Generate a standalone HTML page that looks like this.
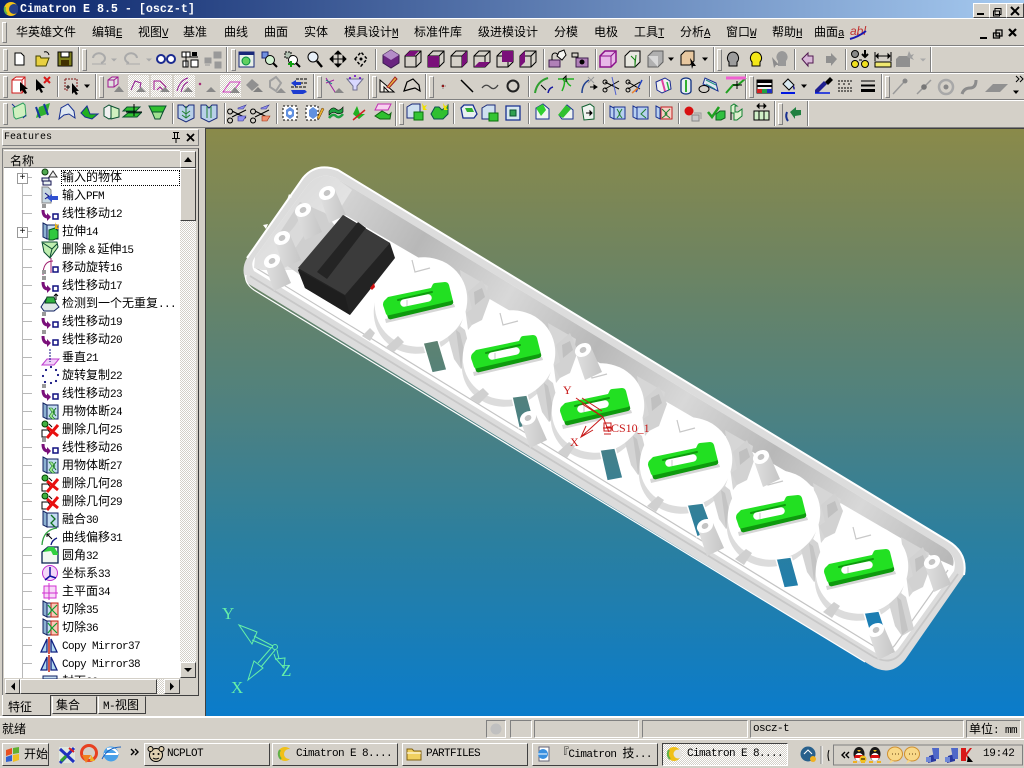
<!DOCTYPE html>
<html><head><meta charset="utf-8"><title>Cimatron E 8.5</title>
<style>
html,body{margin:0;padding:0;background:#d4d0c8;width:1024px;height:768px;overflow:hidden}
body{position:relative;font:12px/14px "WenQuanYi Zen Hei","Noto Sans CJK SC",sans-serif;color:#000}
div,span.a,svg.a{position:absolute}
i{font:normal 11px "Liberation Mono",monospace;letter-spacing:-.6px}
.m{position:absolute;top:25px;white-space:nowrap}
.m u{font:11px "Liberation Mono",monospace;letter-spacing:-.6px;text-decoration:underline}
.row{left:0;width:1024px;border-top:1px solid #fff;border-bottom:1px solid #808080;box-sizing:border-box}
.e{width:1px;background:#808080;box-shadow:1px 0 #fff}
.gr{width:3px;background:#d4d0c8;border:1px solid;border-color:#fff #808080 #808080 #fff;box-sizing:content-box}
.wb{width:16px;height:13px;top:3px;background:#d4d0c8;border:1px solid;border-color:#fff #404040 #404040 #fff}
.t{left:62px;white-space:nowrap;height:18px;line-height:18px}
.d{left:22px;width:10px;height:1px;background:#b8b8b8}
.pl{left:17px;width:9px;height:9px;background:#fff;border:1px solid #999;font:10px/9px "Liberation Mono",monospace;text-align:center}
.btn{background:#d4d0c8;border:1px solid;border-color:#fff #404040 #404040 #fff;box-sizing:border-box}
.sun{top:720px;height:18px;border:1px solid;border-color:#808080 #fff #fff #808080;box-sizing:border-box}
.tk{top:743px;height:23px;width:126px;background:#d4d0c8;border:1px solid;border-color:#fff #404040 #404040 #fff;box-sizing:border-box;font:11px/21px "Liberation Mono",monospace;letter-spacing:-.6px;white-space:nowrap}
.hatch{background:repeating-conic-gradient(#fff 0 25%,#d4d0c8 0 50%) 0 0/2px 2px}
</style></head><body>

<!-- title -->
<div style="left:0;top:0;width:1024px;height:18px;background:linear-gradient(90deg,#0a246a,#a6caf0)"></div>
<svg class="a" style="left:2px;top:1px" width="16" height="16" viewBox="0 0 16 16"><circle cx="9" cy="8" r="7" fill="#f2c218"/><circle cx="12" cy="8" r="5" fill="#26408a"/><path d="M3 6a7 7 0 0 0 2 7" stroke="#5fb548" stroke-width="2" fill="none"/></svg>
<div style="left:20px;top:2px;color:#fff;font:bold 11.67px/14px 'Liberation Mono',monospace;white-space:pre">Cimatron E 8.5 - [oscz-t]</div>
<div class="wb" style="left:973px"></div><div class="wb" style="left:989px"></div><div class="wb" style="left:1006px"></div>
<svg class="a" style="left:973px;top:3px" width="51" height="15"><path d="M4 11h7" stroke="#000" stroke-width="2"/><path d="M22 5.500h6v6h-6zM20.500 8h6v5h-6z" fill="#d4d0c8" stroke="#000"/><path d="M38 4l8 8M46 4l-8 8" stroke="#000" stroke-width="2"/></svg>

<!-- menu -->
<div style="left:0;top:18px;width:1024px;height:28px;border-top:1px solid #fff;border-bottom:1px solid #808080;box-sizing:border-box"></div>
<div class="gr" style="left:2px;top:22px;height:19px"></div>
<span class="m" style="left:16px">华英雄文件</span><span class="m" style="left:92px">编辑<u>E</u></span><span class="m" style="left:138px">视图<u>V</u></span><span class="m" style="left:183px">基准</span><span class="m" style="left:224px">曲线</span><span class="m" style="left:264px">曲面</span><span class="m" style="left:304px">实体</span><span class="m" style="left:344px">模具设计<u>M</u></span><span class="m" style="left:414px">标准件库</span><span class="m" style="left:478px">级进模设计</span><span class="m" style="left:554px">分模</span><span class="m" style="left:594px">电极</span><span class="m" style="left:634px">工具<u>T</u></span><span class="m" style="left:680px">分析<u>A</u></span><span class="m" style="left:726px">窗口<u>W</u></span><span class="m" style="left:772px">帮助<u>H</u></span><span class="m" style="left:814px">曲面<u>a</u></span>
<div style="left:850px;top:24px;font:italic 12px 'Liberation Sans',sans-serif;color:#c03030">abl</div>
<svg class="a" style="left:848px;top:24px" width="176" height="18"><path d="M2 15q8-2 16-8" stroke="#1818b0" stroke-width="2" fill="none"/><path d="M132 14h7" stroke="#000" stroke-width="2"/><path d="M148 6h6v6h-6zM145.500 9h6v5h-6z" fill="#d4d0c8" stroke="#000" stroke-width="1.300"/><path d="M161 5l7 7M168 5l-7 7" stroke="#000" stroke-width="2.200"/></svg>

<!-- toolbars frames -->
<div class="row" style="top:46px;height:27px"></div>
<div class="row" style="top:73px;height:27px"></div>
<div class="row" style="top:100px;height:28px"></div>
<!-- grips row1 -->
<div class="gr" style="left:3px;top:49px;height:20px"></div><div class="e" style="left:78px;top:47px;height:25px"></div>
<div class="gr" style="left:82px;top:49px;height:20px"></div><div class="e" style="left:226px;top:47px;height:25px"></div>
<div class="gr" style="left:231px;top:49px;height:20px"></div><div class="e" style="left:375px;top:49px;height:21px"></div><div class="e" style="left:543px;top:49px;height:21px"></div><div class="e" style="left:595px;top:49px;height:21px"></div><div class="e" style="left:713px;top:47px;height:25px"></div>
<div class="gr" style="left:717px;top:49px;height:20px"></div><div class="e" style="left:794px;top:49px;height:21px"></div><div class="e" style="left:845px;top:49px;height:21px"></div><div class="e" style="left:930px;top:47px;height:25px"></div>
<!-- grips row2 -->
<div class="gr" style="left:3px;top:76px;height:20px"></div><div class="e" style="left:57px;top:76px;height:21px"></div><div class="e" style="left:95px;top:74px;height:25px"></div>
<div class="gr" style="left:99px;top:76px;height:20px"></div><div class="e" style="left:313px;top:74px;height:25px"></div>
<div class="gr" style="left:317px;top:76px;height:20px"></div><div class="e" style="left:368px;top:74px;height:25px"></div>
<div class="gr" style="left:372px;top:76px;height:20px"></div><div class="e" style="left:425px;top:74px;height:25px"></div>
<div class="gr" style="left:429px;top:76px;height:20px"></div><div class="e" style="left:528px;top:76px;height:21px"></div><div class="e" style="left:649px;top:76px;height:21px"></div><div class="e" style="left:745px;top:74px;height:25px"></div>
<div class="gr" style="left:749px;top:76px;height:20px"></div><div class="e" style="left:881px;top:74px;height:25px"></div>
<div class="gr" style="left:885px;top:76px;height:20px"></div>
<!-- grips row3 -->
<div class="gr" style="left:3px;top:103px;height:20px"></div><div class="e" style="left:172px;top:103px;height:21px"></div><div class="e" style="left:224px;top:103px;height:21px"></div><div class="e" style="left:276px;top:103px;height:21px"></div><div class="e" style="left:395px;top:101px;height:25px"></div>
<div class="gr" style="left:399px;top:103px;height:20px"></div><div class="e" style="left:453px;top:103px;height:21px"></div><div class="e" style="left:528px;top:103px;height:21px"></div><div class="e" style="left:603px;top:103px;height:21px"></div><div class="e" style="left:678px;top:103px;height:21px"></div><div class="e" style="left:774px;top:101px;height:25px"></div>
<div class="gr" style="left:778px;top:103px;height:20px"></div><div class="e" style="left:807px;top:101px;height:25px"></div>
<div class="hatch" style="left:128px;top:75px;width:21px;height:22px"></div><div class="hatch" style="left:151px;top:75px;width:21px;height:22px"></div><div class="hatch" style="left:174px;top:75px;width:21px;height:22px"></div><div class="hatch" style="left:220px;top:75px;width:21px;height:22px"></div>

<!-- toolbar icons -->
<svg class="a" style="left:0;top:0" width="1024" height="128" viewBox="0 0 1024 128">
<defs>
<path id="wc" d="M-8-3L-3-8H8V3L3 8H-8ZM-8-3H3V8M3-3L8-8" fill="none" stroke="#000"/>
<path id="dn" d="M-3-1.500h6L0 2Z" fill="#000"/>
<path id="sz" d="M-8-4a2.500 2.500 0 1 0 .1 0M-8 5a2.500 2.500 0 1 0 .1 0M-6-2L8 5M-6 4L8-3" fill="none" stroke="#000"/>
<path id="vb" d="M-8-8h5l3 3 3-3h5V5L0 9l-8-4Z" fill="#b8d0e8" stroke="#182878"/>
<g id="ex"><path d="M-8-5l5-3h8v11l-5 3h-8z" fill="#cfe0f0" stroke="#182878"/><path d="M-1 0h9v8h-9z" fill="#35c535" stroke="#0a700a"/></g>
</defs>
<!-- row 1 -->
<path d="M15 53h6l3 3v9h-9z" fill="#fff" stroke="#000"/>
<path d="M36 56h4l1 2h8l-3 8H36z" fill="#e8d040" stroke="#404000"/><path d="M44 52q4-1 5 3" stroke="#000" fill="none"/>
<path d="M58 52h14v14H58z" fill="#808020" stroke="#000"/><path d="M61 52h8v5h-8z" fill="#fff" stroke="#000"/><path d="M61 60h8v6h-8z" fill="#403000"/>
<path d="M93 58a6 5 0 1 1 8 5" fill="none" stroke="#aaa" stroke-width="2"/><path d="M92 64h14" stroke="#aaa"/><path d="M111 58.500h6l-3 3z" fill="#aaa"/>
<path d="M137 58a6 5 0 1 0-8 5" fill="none" stroke="#aaa" stroke-width="2"/><path d="M126 64h14" stroke="#aaa"/>
<path d="M146 58.500h6l-3 3z" fill="#aaa"/>
<circle cx="161" cy="59" r="4" fill="#fff" stroke="#1a2a90" stroke-width="2"/><circle cx="171" cy="59" r="4" fill="#fff" stroke="#1a2a90" stroke-width="2"/>
<path d="M182 52h8v5h-8zM191 60h7v7h-7zM183 61h5v6h-5zM186 52v15M186 57h12" fill="#fff" stroke="#000"/><path d="M192 52h5v4h-5z" fill="#000"/>
<path d="M205 58h6v5h-6zM205 65h5M214 52h7v6h-7zM215 62h6v6h-6z" fill="#999" stroke="#999"/>
<path d="M239 52h15v15h-15z" fill="#e8f0e8" stroke="#182878"/><path d="M239 52h15v3h-15z" fill="#182878"/><circle cx="246" cy="61" r="4" fill="#60d060" stroke="#084"/>
<path d="M262 52h6v6h-6z" fill="#7090e0" stroke="#182878"/><circle cx="270" cy="60" r="4.500" fill="#d0f0d0" stroke="#000"/><path d="M273 63l4 4" stroke="#000" stroke-width="2"/>
<path d="M285 52h6v6h-6z" fill="#b0c0b0" stroke="#000" stroke-dasharray="2 1"/><circle cx="293" cy="60" r="4.500" fill="#fff" stroke="#000"/><path d="M296 63l4 4" stroke="#000" stroke-width="2"/><path d="M288 64h6M291 61v6" stroke="#10a010" stroke-width="2"/>
<circle cx="313" cy="57" r="5" fill="#e8f0f8" stroke="#000"/><path d="M317 61l5 6" stroke="#000" stroke-width="2.400"/>
<path d="M338 51v16M330 59h16M338 51l-3 3h6zM338 67l-3-3h6zM330 59l3-3v6zM346 59l-3-3v6z" fill="#000" stroke="#000" stroke-width="1"/>
<path d="M355 59l6-7 6 7-6 7z" fill="none" stroke="#000" stroke-dasharray="3 2" stroke-width="1.500"/><circle cx="361" cy="59" r="1.500"/>
<path d="M383 55l8-5 8 5v8l-8 5-8-5z" fill="#6a2580" stroke="#3a1a50"/><path d="M383 55l8 5 8-5-8-5z" fill="#b48cc8"/>
<use href="#wc" x="413" y="59"/><path d="M410 51h9l-5 5h-9z" fill="#7a107a"/>
<use href="#wc" x="436" y="59"/><path d="M428 56h11v11h-11z" fill="#7a107a"/>
<use href="#wc" x="459" y="59"/><path d="M462 56l5-5v11l-5 5z" fill="#7a107a"/>
<use href="#wc" x="482" y="59"/><path d="M474 67l5-5h11l-5 5z" fill="#7a107a"/>
<use href="#wc" x="505" y="59"/><path d="M502 51h11v11h-11z" fill="#7a107a"/>
<use href="#wc" x="528" y="59"/><path d="M520 56l5-5v11l-5 5z" fill="#7a107a"/>
<path d="M549 60h11v7h-11z" fill="#b080b8" stroke="#402050"/><path d="M552 60v-4a3 3 0 0 1 6 0" fill="none" stroke="#000"/><path d="M559 52l5-2 2 5-4 5-5-4z" fill="#f4f4f0" stroke="#000"/>
<path d="M572 53h6v4h-6z" fill="none" stroke="#000"/><path d="M576 58h12v9h-12z" fill="#b080b8" stroke="#402050"/><circle cx="582" cy="62" r="2.500" fill="#000"/>
<path d="M600 56l5-5h11v11l-5 5h-11z" fill="#e8b8e8" stroke="#8a108a" stroke-width="1.500"/><path d="M600 56h11v11M611 56l5-5" fill="none" stroke="#8a108a"/>
<path d="M625 56l5-5h10v11l-5 5h-10z" fill="#e8e8e0" stroke="#000"/><path d="M631 56l4 4v7M636 55l-1 10" stroke="#108010" fill="none"/>
<path d="M648 56l5-5h10v11l-5 5h-10z" fill="#b0b0b0" stroke="#606060"/><path d="M648 56h10v11z" fill="#d8d8d8"/>
<use href="#dn" x="671" y="59"/>
<path d="M681 55l4-4h9v10l-4 4h-9z" fill="#e8c8a0" stroke="#000"/><path d="M690 58l6 8-3 0-1 3z" fill="#000"/>
<use href="#dn" x="705" y="59"/>
<path d="M733 52a6 6 0 0 1 4 10v4h-8v-4a6 6 0 0 1 4-10z" fill="#9c9c9c" stroke="#000"/>
<path d="M756 52a6 6 0 0 1 4 10v4h-8v-4a6 6 0 0 1 4-10z" fill="#f4e818" stroke="#000"/>
<path d="M782 51a6 6 0 0 1 4 10v5h-8v-5a6 6 0 0 1 4-10z" fill="#999"/><path d="M772 57l7 8-3 0-2 3z" fill="#8c8c8c"/>
<path d="M802 59l6-6v3h5v7h-5v3z" fill="#d8b8d8" stroke="#501850"/>
<path d="M837 59l-6-6v3h-5v7h5v3z" fill="#909090"/>
<circle cx="855" cy="54" r="3.500" fill="#888" stroke="#000"/><circle cx="855" cy="64" r="3.500" fill="#f0e020" stroke="#000"/><circle cx="865" cy="64" r="3.500" fill="#f0e020" stroke="#000"/><path d="M865 50v7M862 54l3 3 3-3" stroke="#000" stroke-width="2" fill="none"/><path d="M859 60h3" stroke="#000"/>
<path d="M875 52v9M891 52v9M876 56h14M876 56l2-2v4zM890 56l-2-2v4z" stroke="#000" fill="#000"/><path d="M875 62h16v5h-16z" fill="#f0e870" stroke="#000"/>
<path d="M899 56h11v11h-14v-8z" fill="#909090"/><path d="M909 51l2 4 3-1-2 3 2 3-7-3z" fill="#a0a0a0"/><path d="M920 58.500h6l-3 3z" fill="#aaa"/>
<!-- row 2 -->
<path d="M12 80l4-3h9v12l-3 4h-10z" fill="#fff" stroke="#d01818"/><path d="M12 80h10v13M22 80l3-3" fill="none" stroke="#d01818"/><path d="M20 82v10l2-2 3 4 2-1-2-4h3z" fill="#000"/>
<path d="M36 79v12l3-2 2 4 2-1-2-4h4z" fill="#000"/><path d="M44 77l6 6M50 77l-6 6" stroke="#d81818" stroke-width="2"/>
<path d="M65 79h12v8M65 79v11h4" stroke="#801818" stroke-dasharray="2 1" fill="none"/><path d="M72 83v11l2-2 2 3 2-1-2-3h3z" fill="#000"/><path d="M66 87h4M68 85v4" stroke="#000"/>
<use href="#dn" x="87" y="86"/>
<g fill="none">
<path d="M108 80l4-3h6v7l-4 3h-6zM108 80h6v7M114 80l4-3" stroke="#a01890" fill="#e0e0e0"/><path d="M114 92l5-6 5 6z" fill="#888"/>
<path d="M131 90l4-9 6 2-1 4 3 3" stroke="#901890"/><path d="M136 92l5-5 5 5z" fill="#888"/>
<path d="M154 90v-9h6l6 6-3 3-3-3-3 3" stroke="#a01890"/><path d="M160 92l5-5 5 5z" fill="#888"/>
<path d="M177 91q3-11 11-13M181 92q2-8 7-10" stroke="#901890"/><path d="M183 92l5-5 5 5z" fill="#888"/>
<path d="M199 83l2 2M201 83l-2 2" stroke="#a02070"/><path d="M206 92l5-5 5 5z" fill="#888"/>
<path d="M223 92l7-10h10l-7 10z" stroke="#d040c0"/><path d="M230 93l5-6 5 6z" fill="#888"/>
</g>
<path d="M246 85l6-6 7 6-7 6z" fill="#909090"/><path d="M253 92l5-5 5 5z" fill="#808080"/>
<path d="M270 81l6-4 5 6-5 8-6-4z" fill="none" stroke="#a0a0a0" stroke-width="2"/><path d="M276 93l5-5 5 5z" fill="#909090"/>
<path d="M296 79h12M296 83h12M291 87h16" stroke="#000" stroke-dasharray="3 1"/><path d="M291 83l5-3v2h5v3h-5v2z" fill="#1c3cd0"/><path d="M291 90h14l2 2-4 2h-10z" fill="#1c3cd0"/>
<path d="M326 78l9 14M326 83l8-3" stroke="#a020a0" fill="none"/><path d="M334 93l5-5 5 5z" fill="#888"/><path d="M326 80l6 4" stroke="#108080"/>
<path d="M347 79h16l-6 7v4h-4v-4z" fill="#d8d8ff" stroke="#707090"/><circle cx="350" cy="78" r="1" fill="#60c"/><circle cx="355" cy="76" r="1" fill="#60c"/><circle cx="360" cy="78" r="1" fill="#60c"/>
<path d="M380 92V80l14 12z" fill="#f4f0e8" stroke="#000"/><path d="M384 92v-5l5 5z" fill="none" stroke="#000"/><path d="M387 87l8-10 2 2-8 9z" fill="#e8b040" stroke="#a02020"/>
<path d="M404 91l3-9 6-3 6 6 1 6-5-3-4 1z" fill="none" stroke="#000" stroke-width="1.200"/>
<circle cx="443" cy="86" r="1.300" fill="#901818"/><path d="M441 86h1M445 86h1M443 84v1M443 88v1" stroke="#888"/>
<path d="M461 80l12 12" stroke="#000" stroke-width="1.500"/><path d="M482 88q4-5 8-1t8-2" stroke="#444" fill="none" stroke-width="1.300"/>
<circle cx="513" cy="86" r="5.500" fill="none" stroke="#222" stroke-width="2"/>
<path d="M535 93q2-12 13-15" fill="none" stroke="#30a030" stroke-width="2"/><path d="M541 85l5 5" stroke="#000"/><path d="M548 93q1-5 5-6" stroke="#1818a0" fill="none" stroke-width="1.500"/>
<path d="M558 79h16M562 79q5 1 0 12M566 79q1 5 5 7" stroke="#20b020" fill="none" stroke-width="1.500"/><path d="M563 79l3-3v6" stroke="#000" fill="none"/>
<path d="M582 93q0-9 7-13" fill="none" stroke="#204090" stroke-width="1.500"/><path d="M588 77l6 6M594 77l-6 6" stroke="#999"/><path d="M590 87h7M597 87l-3-2v4z" stroke="#000"/>
<path d="M605 82l14 7M605 89l14-8" stroke="#000"/><circle cx="605" cy="82" r="2" fill="none" stroke="#000"/><circle cx="605" cy="90" r="2" fill="none" stroke="#000"/><path d="M612 77l4 18" stroke="#5060d0"/>
<path d="M628 82l12 7M628 89l12-7" stroke="#000"/><circle cx="628" cy="82" r="2" fill="none" stroke="#000"/><circle cx="628" cy="90" r="2" fill="none" stroke="#000"/><path d="M636 92l6-12" stroke="#2040c0" stroke-width="1.500"/><path d="M632 93l6-5" stroke="#e88030" stroke-width="1.500"/>
<path d="M656 82l9-4 5 3 1 8-9 4-5-3z" fill="#f0f0f0" stroke="#1a2a90"/><path d="M662 80l3 11" stroke="#e040a0" stroke-width="2"/><path d="M667 82l2 8" stroke="#20b040" stroke-width="1.500"/>
<path d="M681 81a5 3 0 0 1 10 0v10a5 3 0 0 1-10 0z" fill="#e8f0f0" stroke="#103080" stroke-width="1.300"/><path d="M686 80v12" stroke="#30b030" stroke-width="2"/>
<path d="M703 84l15 7-2-8-11-5z" fill="#e0e8f0" stroke="#183090"/><ellipse cx="704" cy="89" rx="5" ry="3.500" fill="none" stroke="#000"/><path d="M706 80l10 5M706 84l9 5" stroke="#209080"/>
<path d="M726 93l7-8h5l8-7" fill="none" stroke="#20a020" stroke-width="2"/><path d="M726 78h20" stroke="#f060d0" stroke-width="3"/><path d="M733 85h9M737 81v8" stroke="#000"/>
<path d="M757 80h15v13h-15z" fill="#f4f4f4" stroke="#000"/><path d="M757 80h15v3h-15zM757 85h15v2h-15z" fill="#000"/><path d="M757 89h5v4h-5z" fill="#d02020"/><path d="M762 89h5v4h-5z" fill="#20a040"/><path d="M767 89h5v4h-5z" fill="#2030c0"/>
<path d="M781 92h14v2h-14z" fill="#0018e0"/><path d="M783 84l5-5 6 6-5 5z" fill="#d8e8f0" stroke="#000"/><path d="M793 85q3 3 1 5l-1-2z" fill="#202090"/>
<use href="#dn" x="804" y="86"/>
<path d="M815 93h3l9-9-3-3-9 9z" fill="#202090"/><path d="M825 82l5-5 3 3-5 5z" fill="#000"/><path d="M815 93h15" stroke="#0018e0" stroke-width="1.500"/>
<path d="M838 81h15M838 84h3M843 84h3M848 84h3M838 88h15M838 91h15" stroke="#000" stroke-dasharray="2 1"/>
<path d="M861 81h14" stroke="#000"/><path d="M861 85.500h14" stroke="#000" stroke-width="2"/><path d="M861 90.500h14" stroke="#000" stroke-width="3"/>
<path d="M893 94l11-12" stroke="#999" stroke-width="1.500"/><circle cx="905" cy="81" r="2.500" fill="#888"/>
<path d="M917 94l14-14" stroke="#999" stroke-width="1.500"/><circle cx="924" cy="87" r="2.800" fill="#777"/>
<circle cx="946" cy="87" r="7" fill="none" stroke="#a8a8a8" stroke-width="2.500"/><circle cx="946" cy="87" r="2.500" fill="#888"/>
<path d="M962 94q2-6 8-6t6-8" stroke="#8c8c8c" stroke-width="3" fill="none"/>
<path d="M985 92l8-8h15l-8 8z" fill="#909090"/>
<path d="M1016 76l3 3-3 3M1020 76l3 3-3 3" stroke="#000" fill="none"/><use href="#dn" x="1016" y="92"/>
<!-- row 3 -->
<path d="M13 108l10-5 2 2 1 11-10 3-2-2z" fill="#d0f0c0" stroke="#30a060"/><path d="M12 104l3 3M23 118l3-3" stroke="#183090"/>
<path d="M36 118l3-11 11-4-3 11z" fill="#30b030"/><path d="M36 107l4 11M44 104l4 11" stroke="#1838a0" stroke-width="2"/>
<path d="M59 119l2-11 7-4 6 7 1 7-6-4-5 1z" fill="#e0e8f0" stroke="#183090"/>
<path d="M81 113l6-7 3 8h8l-6 5-7-2z" fill="#20b020" stroke="#183090"/>
<path d="M104 108l5-3 5 3v8l-5 3-5-3z" fill="#f0f0f0" stroke="#0a5030"/><path d="M111 106l8 3v8l-8 2z" fill="#d0f0c0" stroke="#0a5030"/>
<path d="M127 107h13l-4 4h-13zM123 117h14l4-4h-13z" fill="#30c030" stroke="#0a5030"/><path d="M126 112h16" stroke="#000"/><path d="M134 104v12" stroke="#000"/>
<path d="M149 106h17l-3 6h-11z" fill="#30c030" stroke="#0a5030"/><path d="M152 112h11l-3 7h-5z" fill="#a0e090" stroke="#0a5030"/>
<use href="#vb" x="186" y="113"/><path d="M186 106v12M182 111l4 3 4-3M182 115l4 3 4-3" stroke="#208030" fill="none"/>
<use href="#vb" x="209" y="113"/><path d="M207 106v12M211 106v12" stroke="#208030"/>
<use href="#sz" x="238" y="113"/><path d="M238 108l8-3-3 4h-5zM238 116h8l-3 5h-5z" fill="#9090f0" stroke="#303090" stroke-width=".6"/>
<use href="#sz" x="261" y="113"/><path d="M261 108l8-3-3 4h-5z" fill="#9090f0" stroke="#303090" stroke-width=".6"/><path d="M262 116h8l-3 5h-5z" fill="#f09070" stroke="#a03010" stroke-width=".6"/>
<path d="M283 106h14v14h-14z" fill="#fff" stroke="#000" stroke-dasharray="2 2"/><path d="M286 110l4-3 4 3v6l-4 3-4-3z" fill="#6090e0"/><circle cx="290" cy="113" r="2" fill="#fff"/>
<path d="M306 106h12v14h-12z" fill="#fff" stroke="#000" stroke-dasharray="2 2"/><path d="M309 110l4-3 4 3v6l-4 3-4-3z" fill="#6090e0"/><path d="M317 118l5-10 2 1-5 10z" fill="#e8b030" stroke="#603000" stroke-width=".5"/>
<path d="M329 111q4-5 7-2t7-2v5q-4 3-7 1t-7 2z" fill="#20a040" stroke="#000" stroke-width=".6"/><path d="M329 118q4-5 7-2t7-2" fill="none" stroke="#20a040" stroke-width="2.500"/>
<path d="M353 114l4-8 3 8h5l-6 5z" fill="#20b020"/><path d="M353 120l12-10" stroke="#d02020" stroke-width="1.500"/>
<path d="M378 104h13l-3 6h-13z" fill="#f8d0f0" stroke="#c030b0"/><path d="M375 116l7-5 7 4 2-2-1 6h-10z" fill="#30c030" stroke="#106010"/>
<g><use href="#ex" x="415" y="112"/><path d="M422 103l2 3 3-1-2 3 2 2-4 0z" fill="#f0e000"/></g>
<path d="M431 114l4-7h4l3 3 6-5v9l-5 5h-9z" fill="#30c030" stroke="#0a5050"/><path d="M443 103l2 3 3-1-2 3 2 2-4 0z" fill="#f0e000"/>
<path d="M461 108l3-3h9l4 9-3 4h-11z" fill="#e8f0f0" stroke="#183090" stroke-width="1.300"/><path d="M465 108h7l2 4h-7z" fill="#30b030"/>
<use href="#ex" x="490" y="113"/>
<path d="M506 106h14v14h-14z" fill="#d8e8f0" stroke="#183090" stroke-width="1.300"/><path d="M510 110h6v6h-6z" fill="#30a050" stroke="#0a5030"/>
<path d="M536 108l7-4 6 5v10h-13z" fill="#f0f4f0" stroke="#183090"/><path d="M536 108l7-4 3 6-5 6z" fill="#30d030"/>
<path d="M559 115l8-10 6 5v9h-11z" fill="#f0f4f0" stroke="#183090"/><path d="M558 115l8-10 5 4-8 9z" fill="#30c030"/>
<path d="M582 107l8-3 4 3v12l-10 1z" fill="#f0f4f0" stroke="#106030"/><path d="M586 113h6M592 113l-2-2v4z" stroke="#000"/>
<path d="M610 106l4 2v11l-4-2zM614 107h11v12h-11z" fill="#b8d0f0" stroke="#183090"/><path d="M617 109l3 5-3 4M622 109l-3 5 3 4" stroke="#208030" fill="none"/>
<path d="M633 106l4 2v11l-4-2zM637 107h11v12h-11z" fill="#b8d0f0" stroke="#183090"/><path d="M646 109l-5 5 5 4" stroke="#208030" fill="none"/>
<path d="M656 106l4 2v11l-4-2z" fill="#b8d0f0" stroke="#183090"/><path d="M661 107h11v12h-11z" fill="#f8d0c8" stroke="#c02020"/><path d="M662 109l5 5-5 4M670 109l-5 5 5 4" stroke="#208030" fill="none"/>
<circle cx="689" cy="111" r="4.500" fill="#d81010"/><path d="M692 115h7v6h-7z" fill="#c8c8c8" stroke="#888"/><path d="M694 113h7v6" fill="none" stroke="#999"/>
<path d="M708 112l4 5 7-10" fill="none" stroke="#20a020" stroke-width="2.500"/><path d="M716 114l4-3h5v7l-4 2h-5z" fill="#30c040" stroke="#106020"/>
<path d="M731 106l3-2 3 2h-2v6h3l4-3v7l-5 4h-3v-7h-3z" fill="#e0f0d0" stroke="#108030"/><path d="M731 112v8" stroke="#000"/>
<path d="M754 111h15v9h-15z" fill="#d0f0c8" stroke="#000"/><path d="M757 106h9M757 106l2-2v4zM766 106l-2-2v4zM759 111v9M764 111v9" stroke="#000" fill="#000"/>
<path d="M787 112q-2 5 1 9" stroke="#183090" fill="none" stroke-width="2"/><path d="M790 112l6-5 0 3h5v5l-6 1v3z" fill="#208040"/>
</svg>

<!-- viewport -->
<div style="left:205px;top:128px;width:819px;height:588px;border-left:1px solid #404040;border-top:1px solid #404040;box-sizing:border-box;background:linear-gradient(#8a8a4a 0,#6f8460 22%,#4e8180 48%,#2b7f9f 70%,#0a7ccb 100%)"></div>
<svg class="a" style="left:0;top:0;pointer-events:none" width="1024" height="716" viewBox="0 0 1024 716">
<defs>
<linearGradient id="bg" gradientUnits="userSpaceOnUse" x1="0" y1="128" x2="0" y2="716"><stop offset="0" stop-color="#8a8a4a"/><stop offset=".22" stop-color="#6f8460"/><stop offset=".48" stop-color="#4e8180"/><stop offset=".7" stop-color="#2b7f9f"/><stop offset="1" stop-color="#0a7ccb"/></linearGradient>
<linearGradient id="wall" gradientUnits="userSpaceOnUse" x1="340" y1="176" x2="428" y2="229" spreadMethod="reflect"><stop offset="0" stop-color="#d8d8d8"/><stop offset="1" stop-color="#b8b8b8"/></linearGradient>
<linearGradient id="end" gradientUnits="userSpaceOnUse" x1="250" y1="180" x2="340" y2="270"><stop offset="0" stop-color="#d4d4d4"/><stop offset="1" stop-color="#ececec"/></linearGradient>
<linearGradient id="cy" x1="0" y1="0" x2="1" y2="0"><stop offset="0" stop-color="#e0e0e0"/><stop offset="1" stop-color="#c6c6c6"/></linearGradient>
<g id="cyl"><path d="M-8 1L8-3 19 22 2 30Z" fill="url(#cy)"/><ellipse cx="0" cy="0" rx="8.500" ry="6.500" transform="rotate(-30)" fill="#fff"/><ellipse cx="0" cy="0" rx="3.500" ry="2.800" transform="rotate(-30)" fill="#c4c4c4"/></g>
<g id="sock">
<path d="M42-30L70-14 66 10 50 30Z" fill="#d6d6d6"/>
<ellipse cx="1" cy="10" rx="46" ry="43" transform="rotate(-30 1 10)" fill="#dcdcdc"/>
<ellipse cx="3" cy="2" rx="47" ry="44" transform="rotate(-30 3 2)" fill="#fff"/>
<path d="M30 37l12-11 5 4 8 32-12 7-7-10z" fill="#d4d4d4"/><path d="M38 30l4 3 7 30-6 5z" fill="#c4c4c4"/>
<path d="M50-8l14-12 8 18-8 22-10 5-6-12 6-4z" fill="#d2d2d2"/><path d="M56-8l8-4 3 9-10 8z" fill="#c0c0c0"/>
<path d="M-6-40l3 12 15-4" fill="none" stroke="#c8c8c8" stroke-width="1.200"/>
<path d="M-33 19L36 4 37 7-32 23Z" fill="#d6d6d6"/>
<path d="M-34 4L-30 18Q-29 20-26 19L33 5Q36 4 35 1L34-2Z" fill="#0e9a0e"/>
<path d="M-34 1Q-36 4-34 8L-32 14Q-31 16-28 15L33 1Q35 0 34-3L31-15Q30-18 27-18L17-17Q15-17 14-14L13-12-30-3Z" fill="#22e022"/>
<path d="M-20 0L14-8" stroke="#0e9a0e" stroke-width="2" stroke-linecap="round"/>
<path d="M-14 3L10-2" stroke="#fff" stroke-width="7.500" stroke-linecap="round"/>
<path d="M-11 0v6" stroke="#c8c8c8"/>
</g>
</defs>
<!-- shell -->
<path d="M247 283Q240 270 247 258L303 178Q316 162 338 170L948 541Q968 553 964 575L905 660Q890 678 870 665Z" fill="#dcdcdc"/>
<path d="M247 258L303 178Q316 162 338 170L948 541Q968 553 964 575" fill="none" stroke="#fff" stroke-width="2"/>
<path d="M246 275Q244 283 254 290L865 662" fill="none" stroke="#fff" stroke-width="1.200"/>
<!-- cavity -->
<path d="M254 271Q250 264 255 257L307 186Q319 171 336 178L943 547Q958 556 954 571L898 649Q888 660 874 652Z" fill="#fff"/>
<path d="M250 276L874 657Q892 666 902 652L958 574" fill="none" stroke="#c8c8c8" stroke-width="1.800"/>
<path d="M256 268L877 648Q888 654 895 645L948 570" fill="none" stroke="#c4c4c4" stroke-width="1.200"/>
<!-- upper wall -->
<path d="M336 178L943 547Q956 555 953 566L935 558L316 198Z" fill="url(#wall)"/>
<path d="M255 257L307 186Q319 171 336 178L352 190 320 240 300 270 262 270 254 268Z" fill="url(#end)"/>
<path d="M300 272L372 316 352 326 280 282Z" fill="#fff"/>
<path d="M275 240L300 202 325 213 340 232 300 275 282 262Z" fill="#cfcfcf"/>
<path d="M283 238Q298 226 302 211L316 218 290 256Z" fill="#dadada"/>
<path d="M287 200l2-6 3 3zM266 229l-3-4 5-1z" fill="#fff"/>
<!-- sockets -->
<use href="#sock" x="418" y="300"/><use href="#sock" x="506" y="353"/><use href="#sock" x="595" y="406"/><use href="#sock" x="683" y="460"/><use href="#sock" x="771" y="513"/><use href="#sock" x="859" y="567"/>
<!-- slots -->
<g fill="url(#bg)" stroke="#fff" stroke-width="1.500">
<path d="M423 343L438 340 447 370 432 373Z"/><path d="M512 397L527 395 535 424 519 428Z"/><path d="M600 450L615 448 623 478 607 481Z"/><path d="M687 505L703 503 713 530 697 537Z"/><path d="M776 559L791 557 799 586 784 588Z"/><path d="M864 613L879 611 884 626 870 634Z"/>
</g>
<!-- rim detail on lower band -->
<g fill="#d0d0d0"><path d="M385 348l9 4 10-10-6-6zM362 336l8 5 5-8-5-5zM470 398l9 6 10-10-6-6zM558 452l9 6 8-12-6-4zM647 506l9 6 8-12-6-4zM735 559l9 6 8-12-6-4zM823 612l9 6 8-12-6-4z"/></g>
<!-- cylinders -->
<use href="#cyl" x="327" y="193"/><use href="#cyl" x="303" y="210"/><use href="#cyl" x="282" y="238"/><use href="#cyl" x="272" y="261"/><use href="#cyl" x="583" y="350"/><use href="#cyl" x="528" y="418"/><use href="#cyl" x="761" y="457"/><use href="#cyl" x="705" y="526"/><use href="#cyl" x="932" y="562"/><use href="#cyl" x="876" y="630"/>
<!-- black box -->
<path d="M343 215L390 243 395 258 350 315 305 288 298 270Z" fill="#232323"/>
<path d="M343 215L390 243 345 295 298 268Z" fill="#3b3b3b"/>
<path d="M358 222L366 228 327 279 317 272Z" fill="#242424"/>
<path d="M298 270L345 296 350 315 305 288Z" fill="#1e1e1e"/>
<path d="M370 288l4-5 1 4-3 3z" fill="#d01010"/>
<!-- csys -->
<g stroke="#c81818" fill="none" stroke-width="1">
<path d="M576 398L603 417M582 398L602 411M582 404L603 417"/><path d="M581 437L603 417M586 426L581 437 593 430"/><path d="M603 417L609 432M606 427h5"/>
<rect x="604" y="423" width="7" height="8"/><path d="M603 428h9M604 434h7"/>
</g>
<g font-family="'Liberation Serif',serif" fill="#c81818" font-size="12"><text x="563" y="394">Y</text><text x="570" y="446">X</text><text x="611" y="432">CS10_1</text></g>
<!-- triad -->
<g stroke="#66f0a8" fill="none" stroke-width="1">
<path d="M239 625L257 632 252 644Z"/><path d="M254 636L273 646M252 640L271 648"/>
<path d="M248 680L254 661 263 668Z"/><path d="M258 663L272 647M261 667L275 650"/>
<circle cx="275" cy="647" r="2.500"/><path d="M277 650L279 659 M274 654L276 660"/><path d="M276 659L285 658 284 668Z"/>
</g>
<g font-family="'Liberation Serif',serif" fill="#66f0a8" font-size="17"><text x="222" y="619">Y</text><text x="231" y="693">X</text><text x="281" y="676">Z</text></g>
</svg>

<!-- side panel -->
<div style="left:0;top:128px;width:205px;height:588px;background:#d4d0c8"></div>
<div style="left:2px;top:129px;width:197px;height:17px;border:1px solid;border-color:#fff #808080 #808080 #fff;box-sizing:border-box"></div>
<div style="left:4px;top:132px;font:10px/12px 'Liberation Mono',monospace">Features</div>
<svg class="a" style="left:170px;top:131px" width="28" height="13"><path d="M3 1.500h6M4.500 2v5M7.500 2v5M2 7.500h8M6 8v4" stroke="#000" fill="none"/><path d="M17 3l7 7M24 3l-7 7" stroke="#000" stroke-width="1.800"/></svg>
<div style="left:2px;top:148px;width:197px;height:548px;border:1px solid;border-color:#808080 #404040 #404040 #808080;box-sizing:border-box"></div>
<div style="left:4px;top:150px;width:176px;height:528px;background:#fff;overflow:hidden" id="tree">
<div style="left:0;top:0;width:176px;height:18px;background:#d4d0c8;border-bottom:1px solid #808080;box-sizing:border-box;line-height:19px;padding-left:6px;border-top:1px solid #fff">名称</div>
</div>
<!-- tree lines -->
<div style="left:22px;top:168px;width:1px;height:510px;background:#b8b8b8"></div>
<div class="d" style="top:177px"></div><div class="d" style="top:195px"></div><div class="d" style="top:213px"></div><div class="d" style="top:231px"></div><div class="d" style="top:249px"></div><div class="d" style="top:267px"></div><div class="d" style="top:285px"></div><div class="d" style="top:303px"></div><div class="d" style="top:321px"></div><div class="d" style="top:339px"></div><div class="d" style="top:357px"></div><div class="d" style="top:375px"></div><div class="d" style="top:393px"></div><div class="d" style="top:411px"></div><div class="d" style="top:429px"></div><div class="d" style="top:447px"></div><div class="d" style="top:465px"></div><div class="d" style="top:483px"></div><div class="d" style="top:501px"></div><div class="d" style="top:519px"></div><div class="d" style="top:537px"></div><div class="d" style="top:555px"></div><div class="d" style="top:573px"></div><div class="d" style="top:591px"></div><div class="d" style="top:609px"></div><div class="d" style="top:627px"></div><div class="d" style="top:645px"></div><div class="d" style="top:663px"></div>
<div class="pl" style="top:173px">+</div><div class="pl" style="top:227px">+</div>
<div style="left:61px;top:170px;width:119px;height:16px;border:1px dotted #000;box-sizing:border-box"></div>
<div class="t" style="top:168px">输入的物体</div>
<div class="t" style="top:186px">输入<i>PFM</i></div>
<div class="t" style="top:204px">线性移动<i>12</i></div>
<div class="t" style="top:222px">拉伸<i>14</i></div>
<div class="t" style="top:240px">删除 <i>&amp;</i> 延伸<i>15</i></div>
<div class="t" style="top:258px">移动旋转<i>16</i></div>
<div class="t" style="top:276px">线性移动<i>17</i></div>
<div class="t" style="top:294px">检测到一个无重复<i>...</i></div>
<div class="t" style="top:312px">线性移动<i>19</i></div>
<div class="t" style="top:330px">线性移动<i>20</i></div>
<div class="t" style="top:348px">垂直<i>21</i></div>
<div class="t" style="top:366px">旋转复制<i>22</i></div>
<div class="t" style="top:384px">线性移动<i>23</i></div>
<div class="t" style="top:402px">用物体断<i>24</i></div>
<div class="t" style="top:420px">删除几何<i>25</i></div>
<div class="t" style="top:438px">线性移动<i>26</i></div>
<div class="t" style="top:456px">用物体断<i>27</i></div>
<div class="t" style="top:474px">删除几何<i>28</i></div>
<div class="t" style="top:492px">删除几何<i>29</i></div>
<div class="t" style="top:510px">融合<i>30</i></div>
<div class="t" style="top:528px">曲线偏移<i>31</i></div>
<div class="t" style="top:546px">圆角<i>32</i></div>
<div class="t" style="top:564px">坐标系<i>33</i></div>
<div class="t" style="top:582px">主平面<i>34</i></div>
<div class="t" style="top:600px">切除<i>35</i></div>
<div class="t" style="top:618px">切除<i>36</i></div>
<div class="t" style="top:636px"><i>Copy Mirror37</i></div>
<div class="t" style="top:654px"><i>Copy Mirror38</i></div>
<!-- tree icons -->
<svg class="a" style="left:0;top:0" width="200" height="690" viewBox="0 0 200 690">
<defs>
<g id="mv"><rect x="-8" y="-9" width="4" height="4" fill="#999"/><path d="M-7-3q0 7 5 7" fill="none" stroke="#7a107a" stroke-width="3"/><path d="M-3 8l4-4-4-4z" fill="#7a107a"/><rect x="3" y="1" width="5" height="5" fill="#fff" stroke="#101080" stroke-width="1.500"/></g>
<g id="bk"><path d="M-7-8l4 2v14l-4-2z" fill="#8cb0d0" stroke="#102060"/><path d="M-3-6H8V8H-3z" fill="#c4dcf0" stroke="#102060"/></g>
<g id="xx"><circle cx="-5" cy="-5" r="3" fill="#40b040" stroke="#004000"/><path d="M-8 1h6l3 4-3 3h-6z" fill="none" stroke="#000"/><path d="M-1-5l3 3" stroke="#000"/><path d="M-3-2L8 7M8-4L-3 9" stroke="#e81010" stroke-width="3"/></g>
<g id="cu"><use href="#bk"/><path d="M-1-3h3l3 4-3 4 3 3h-3l-3-3 3-4z" fill="#a0e890" stroke="#107020" stroke-width=".6"/><path d="M6-3l-3 4 3 4" fill="none" stroke="#107020"/></g>
<g id="cut"><use href="#bk"/><path d="M1-6H8V8H1z" fill="#f8c8b8" stroke="#c02010"/><path d="M-2-4l4 5-4 5M7-4L2 1l5 5" fill="none" stroke="#10a030" stroke-width="1.200"/></g>
<g id="mir"><path d="M-1-8v17" stroke="#c02010" stroke-width="1.500"/><path d="M-3-6L-9 7H-3Z" fill="#b0d8f0" stroke="#102080" stroke-width="1.300"/><path d="M1-6L7 7H1Z" fill="#b0d8f0" stroke="#102080" stroke-width="1.300"/></g>
</defs>
<g transform="translate(50 177)"><circle cx="-5" cy="-5" r="3" fill="#50a850" stroke="#104010"/><path d="M3-6l4 6H-1z" fill="#f0f0f0" stroke="#303030"/><path d="M-8 1h7v3H-8zM-7 4h8v4h-8z" fill="#e8f0f0" stroke="#101050"/></g>
<g transform="translate(50 195)"><path d="M-8-8h6l3 3v13H-8z" fill="#c8d8e0" stroke="#888"/><path d="M-5-2L0 2M-5 4L-1 1" stroke="#101080"/><path d="M8 1H2v-2L-3 3l5 4V5h6z" fill="#3050d0"/></g>
<use href="#mv" x="50" y="213"/>
<g transform="translate(50 231)"><use href="#bk"/><path d="M-1-1L5-3 8 0V7L3 9H-1z" fill="#30c840" stroke="#0a5020"/><path d="M5-9l1 3 3-1-2 3 2 2-4 0z" fill="#e8b010"/></g>
<g transform="translate(50 249)"><path d="M-8-7H7L8-2 0 9-6 3z" fill="#bfeeb0" stroke="#0a4a30"/><path d="M-7-6L2 0 0 8M7-5L2 0" fill="none" stroke="#0a4a30"/></g>
<g transform="translate(50 267)"><path d="M-7 8Q-7-6 3-6" fill="none" stroke="#a02070"/><path d="M1-9v15" stroke="#a02070"/><rect x="-8" y="3" width="4" height="4" fill="#999"/><rect x="3" y="0" width="5" height="5" fill="#fff" stroke="#101080" stroke-width="1.500"/></g>
<use href="#mv" x="50" y="285"/>
<g transform="translate(50 303)"><path d="M-9 4L-4-4H3L9 4 4 8H-6z" fill="#e0e8e8" stroke="#102060"/><path d="M-3-6H4L6 0H-5z" fill="#30b040" stroke="#0a4020"/><path d="M6-9v6M4-7l2-2 2 2" stroke="#000" fill="none"/></g>
<use href="#mv" x="50" y="321"/><use href="#mv" x="50" y="339"/>
<g transform="translate(50 357)"><path d="M-8 8L-3 2H9L4 8z" fill="#f0d0f8" stroke="#c040d0"/><path d="M0-8V5" stroke="#101080" stroke-dasharray="2 1"/></g>
<g transform="translate(50 375)" fill="#101080"><circle cx="1" cy="-8" r="1.100"/><circle cx="-4" cy="-5" r="1.100"/><circle cx="6" cy="-5" r="1.100"/><circle cx="-7" cy="1" r="1.100"/><circle cx="8" cy="0" r="1.100"/><circle cx="-5" cy="7" r="1.100"/><circle cx="1" cy="8" r="1.100"/><circle cx="6" cy="6" r="1.100"/></g>
<use href="#mv" x="50" y="393"/>
<use href="#cu" x="50" y="411"/><use href="#xx" x="50" y="429"/><use href="#mv" x="50" y="447"/><use href="#cu" x="50" y="465"/><use href="#xx" x="50" y="483"/><use href="#xx" x="50" y="501"/>
<g transform="translate(50 519)"><use href="#bk"/><path d="M1-4l4 4-4 4 4 4" fill="none" stroke="#107020" stroke-width="1.300"/></g>
<g transform="translate(50 537)"><path d="M-8 8Q-7-7 7-9" fill="none" stroke="#30a040" stroke-width="1.300"/><path d="M-3-3L2 2M-3-3h3M-3-3v3" stroke="#000" fill="none"/><path d="M1 8Q2 3 7 1" fill="none" stroke="#101880" stroke-width="1.300"/></g>
<g transform="translate(50 555)"><path d="M-8-3L-2-8H8V8H-8Z" fill="#f0f8f0" stroke="#082050" stroke-width="1.300"/><path d="M-7-3L-2-8 H4L8-2 V0H3L1-4Z" fill="#30d040"/></g>
<g transform="translate(50 573)"><circle r="7.500" fill="#f4d8f8" stroke="#c030d0"/><path d="M0-6V3M0 3L-5 7M0 3L6 5" stroke="#1010a0" stroke-width="1.500"/></g>
<g transform="translate(50 591)"><path d="M-6-5H6V7H-6Z" fill="#f8d8f8" stroke="#d030d0"/><path d="M-1-8V9M-8 2H8" stroke="#d030d0"/></g>
<use href="#cut" x="50" y="609"/><use href="#cut" x="50" y="627"/>
<use href="#mir" x="50" y="645"/><use href="#mir" x="50" y="663"/>
<path d="M43 679h14v-3h-14z" fill="#c4dcf0" stroke="#102060"/>
</svg>
<div class="t" style="top:672px;height:6px;overflow:hidden;line-height:18px">封面<i>39</i></div>
<!-- scrollbars -->
<div class="hatch" style="left:180px;top:168px;width:16px;height:510px"></div>
<div class="btn" style="left:180px;top:151px;width:16px;height:17px"></div>
<svg class="a" style="left:180px;top:151px" width="16" height="17"><path d="M4 11h8L8 6z"/></svg>
<div class="btn" style="left:180px;top:168px;width:16px;height:53px"></div>
<div class="btn" style="left:180px;top:662px;width:16px;height:16px"></div>
<svg class="a" style="left:180px;top:662px" width="16" height="16"><path d="M4 6h8l-4 4z"/></svg>
<div class="hatch" style="left:5px;top:679px;width:175px;height:15px"></div>
<div class="btn" style="left:5px;top:679px;width:15px;height:15px"></div>
<svg class="a" style="left:5px;top:679px" width="15" height="15"><path d="M10 3.500v8l-4-4z"/></svg>
<div class="btn" style="left:20px;top:679px;width:137px;height:15px"></div>
<div class="btn" style="left:164px;top:679px;width:16px;height:15px"></div>
<svg class="a" style="left:164px;top:679px" width="16" height="15"><path d="M6 3.500v8l4-4z"/></svg>
<div style="left:180px;top:679px;width:17px;height:16px;background:#d4d0c8"></div>
<!-- tabs -->
<div style="left:52px;top:696px;width:45px;height:18px;border:1px solid;border-color:#d4d0c8 #404040 #404040 #fff;box-sizing:border-box;line-height:15px;padding-left:3px">集合</div>
<div style="left:98px;top:696px;width:48px;height:18px;border:1px solid;border-color:#d4d0c8 #404040 #404040 #fff;box-sizing:border-box;line-height:15px;padding-left:4px"><i>M-</i>视图</div>
<div style="left:2px;top:695px;width:49px;height:21px;background:#d4d0c8;border-left:1px solid #fff;border-right:1px solid #404040;border-bottom:1px solid #404040;box-sizing:border-box;line-height:24px;padding-left:5px">特征</div>

<!-- status -->
<div style="left:0;top:716px;width:1024px;height:2px;background:#fff"></div>
<div style="left:2px;top:722px">就绪</div>
<div class="sun" style="left:486px;width:20px"></div><svg class="a" style="left:486px;top:720px" width="20" height="18"><circle cx="10" cy="9" r="5.500" fill="#c0c0c0"/></svg>
<div class="sun" style="left:510px;width:22px"></div><div class="sun" style="left:534px;width:105px"></div><div class="sun" style="left:642px;width:106px"></div>
<div class="sun" style="left:750px;width:214px;padding-left:2px;font:11px/16px 'Liberation Mono',monospace;letter-spacing:-.6px">oscz-t</div>
<div class="sun" style="left:966px;width:55px;padding-left:2px;line-height:16px">单位<i>: mm</i></div>
<div style="left:0;top:739px;width:1024px;height:1px;background:#fff"></div>

<!-- taskbar -->
<div class="btn" style="left:2px;top:743px;width:47px;height:23px;line-height:19px;padding-left:21px">开始</div>
<svg class="a" style="left:4px;top:745px" width="18" height="18"><path d="M2 5l6-2v6l-6 2z" fill="#e85020"/><path d="M9 3l6-1v6l-6 1z" fill="#60b030"/><path d="M2 12l6-2v6l-6 1z" fill="#3060d0"/><path d="M9 10l6-1v6l-6 2z" fill="#f0c020"/></svg>
<svg class="a" style="left:56px;top:743px" width="90" height="24">
<path d="M3 4h16v16H3z" fill="#e0e8e0"/><path d="M4 6l14 13M18 5L4 20" stroke="#2030c0" stroke-width="3"/><path d="M5 18l5-5" stroke="#30a030" stroke-width="3"/><path d="M13 5l5 4" stroke="#e02020" stroke-width="2"/>
<circle cx="33" cy="10" r="7.500" fill="none" stroke="#e84020" stroke-width="3"/><path d="M26 12h9l-5 8z" fill="#f08020"/><path d="M35 12l4 6h-5z" fill="#f0b020"/>
<circle cx="55" cy="11" r="7.500" fill="#48a0e8"/><path d="M48 11h14M51 6q8-2 11 5" stroke="#fff" stroke-width="2" fill="none"/><path d="M46 16q6-12 19-12" stroke="#1860c0" fill="none"/>
<path d="M75 6l3 3-3 3M79 6l3 3-3 3" stroke="#000" fill="none" stroke-width="1.400"/>
</svg>
<div class="tk" style="left:144px;padding-left:22px">NCPLOT</div>
<svg class="a" style="left:147px;top:745px" width="18" height="18"><circle cx="9" cy="10" r="6.500" fill="#e0d0b0" stroke="#000"/><circle cx="3.500" cy="4" r="2.500" fill="#e0d0b0" stroke="#000"/><circle cx="14.500" cy="4" r="2.500" fill="#e0d0b0" stroke="#000"/><circle cx="6.500" cy="9" r="1" /><circle cx="11.500" cy="9" r="1"/><path d="M6 13q3 2 6 0" stroke="#000" fill="none"/></svg>
<div class="tk" style="left:272px;padding-left:23px">Cimatron E 8....</div>
<svg class="a" style="left:276px;top:745px" width="16" height="18"><circle cx="9" cy="9" r="7" fill="#f0c018"/><circle cx="13" cy="9" r="5" fill="#d4d0c8"/><path d="M4 5a7 7 0 0 0 1 9" stroke="#60b048" stroke-width="2" fill="none"/></svg>
<div class="tk" style="left:402px;padding-left:23px">PARTFILES</div>
<svg class="a" style="left:405px;top:745px" width="18" height="18"><path d="M2 4h5l2 2h7v9H2z" fill="#f0d060" stroke="#806010"/><path d="M2 8h14" stroke="#fff"/></svg>
<div class="tk" style="left:532px;padding-left:24px"><span style="font:12px 'WenQuanYi Zen Hei','Noto Sans CJK SC',sans-serif">『</span>Cimatron <span style="font:12px 'WenQuanYi Zen Hei','Noto Sans CJK SC',sans-serif">技</span>...</div>
<svg class="a" style="left:535px;top:745px" width="18" height="18"><path d="M4 2h10v14H4z" fill="#fff" stroke="#667"/><circle cx="8" cy="9" r="5" fill="#3a90e0"/><path d="M3 9h9" stroke="#fff"/></svg>
<div class="tk hatch" style="left:662px;padding-left:24px;border-color:#404040 #fff #fff #404040">Cimatron E 8....</div>
<svg class="a" style="left:666px;top:745px" width="16" height="18"><circle cx="8" cy="9" r="7" fill="#f0c018"/><circle cx="12" cy="9" r="4.500" fill="#e6e4e0"/><path d="M3 5a7 7 0 0 0 1 9" stroke="#60b048" stroke-width="2" fill="none"/></svg>
<svg class="a" style="left:798px;top:744px" width="226" height="22">
<circle cx="10" cy="10" r="7.500" fill="#28608c"/><path d="M6 10l4-4 4 4" stroke="#fff" fill="none"/><circle cx="15" cy="15" r="3" fill="#f0b020"/>
<path d="M23 2v18" stroke="#808080"/><path d="M24 2v18" stroke="#fff"/>
<path d="M31 6q-2 5 0 11" stroke="#000" fill="none"/>
<path d="M35.500 1h189v20h-189z" fill="none" stroke="#808080"/>
<path d="M47 8l-3 3 3 3M51 8l-3 3 3 3" stroke="#000" fill="none" stroke-width="1.400"/>
<g id="qq"><ellipse cx="61" cy="10" rx="5.500" ry="7" fill="#181818"/><ellipse cx="61" cy="13" rx="4" ry="4" fill="#fff"/><path d="M57 11h8l1 3h-10z" fill="#d81010"/><path d="M59 6h4l-2 2z" fill="#f0c020"/><path d="M55 18h4M63 18h4" stroke="#f0b020" stroke-width="2"/></g>
<circle cx="65" cy="15" r="3.500" fill="#f0c020"/><path d="M63 15h4" stroke="#000"/>
<use href="#qq" x="16"/>
<ellipse cx="97" cy="10" rx="7.500" ry="7" fill="#f8d888" stroke="#d09030"/><path d="M93 16l-2 4 5-3z" fill="#f8d888"/><path d="M94 10h1M97 10h1M100 10h1" stroke="#604010"/>
<ellipse cx="114" cy="10" rx="7.500" ry="7" fill="#f8d888" stroke="#d09030"/><path d="M110 16l-2 4 5-3z" fill="#f8d888"/><path d="M111 10h1M114 10h1M117 10h1" stroke="#604010"/>
<path d="M131 12l3-1 4-1v7l-8 2z" fill="#2838a0"/><path d="M134 4h7v11h-5z" fill="#5068c8"/><path d="M128 13h5v5h-5z" fill="#7088d8"/>
<path d="M150 12l3-1 4-1v7l-8 2z" fill="#2838a0"/><path d="M153 4h7v11h-5z" fill="#5068c8"/><path d="M147 13h5v5h-5z" fill="#7088d8"/>
<path d="M163 4h5v13h-5z" fill="#d81818"/><path d="M167 10l5-6h2l-5 7 5 6h-3z" fill="#d81818"/><path d="M170 12l5 6h-6z" fill="#000"/>
</svg>
<div style="left:983px;top:746px;font:11px/16px 'Liberation Mono',monospace;letter-spacing:-.3px">19:42</div>
</body></html>
